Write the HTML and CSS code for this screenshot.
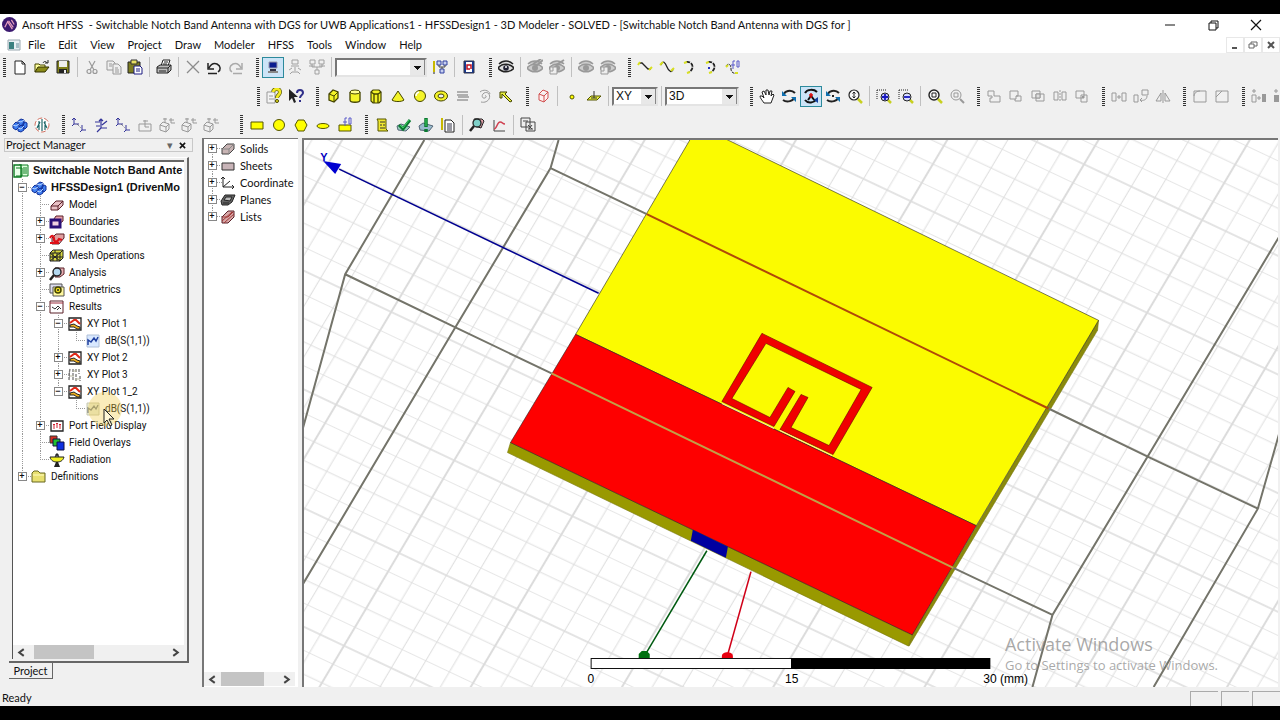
FILE: index.html
```html
<!DOCTYPE html>
<html lang="en">
<head>
<meta charset="utf-8">
<title>Ansoft HFSS</title>
<link rel="stylesheet" href="styles.css">
</head>
<body>
<svg class="sprite" aria-hidden="true">
  <symbol id="new" viewBox="0 0 16 16"><path d="M3 2h7l3 3v10H3z" fill="#fff" stroke="#222"/><path d="M10 2v3h3" fill="none" stroke="#222"/></symbol>
  <symbol id="open" viewBox="0 0 16 16"><path d="M1 13V5h4l1 1h5v2" fill="#ffff9a" stroke="#444400"/><path d="M1 13l3-5h11l-4 5z" fill="#8a8a18" stroke="#333300"/><path d="M9 4c1-2 3-2 4 0M14 1v3h-3" fill="none" stroke="#222"/></symbol>
  <symbol id="save" viewBox="0 0 16 16"><path d="M2 2h12v12H2z" fill="#80801c" stroke="#222"/><path d="M4 2h8v6H4z" fill="#eee"/><path d="M4 10h8v4H4z" fill="#222"/><path d="M9 11h2v3H9z" fill="#eee"/></symbol>
  <symbol id="cut" viewBox="0 0 16 16"><g fill="none" stroke="#999" stroke-width="1.2"><path d="M5 2l5 9M11 2L6 11"/><circle cx="5" cy="12.500" r="2"/><circle cx="11" cy="12.500" r="2"/></g></symbol>
  <symbol id="copy" viewBox="0 0 16 16"><g fill="#eee" stroke="#999"><path d="M1 2h6l2 2v7H1z"/><path d="M7 5h5l3 3v7H7z"/><path d="M3 5h3M3 7h3M9 9h3M9 11h4M9 13h4"/></g></symbol>
  <symbol id="paste" viewBox="0 0 16 16"><path d="M1 3h12v11H1z" fill="#7c7c20" stroke="#222"/><path d="M4 1h6v4H4z" fill="#e8e060" stroke="#333"/><path d="M7 7h6l2 2v6H7z" fill="#fff" stroke="#1a1a80"/><path d="M9 10h4M9 12h4" stroke="#1a1a80"/></symbol>
  <symbol id="print" viewBox="0 0 16 16"><path d="M5 7l2-6h7l-2 6z" fill="#fff" stroke="#222"/><path d="M1 8l3-2h11v5l-3 3H1z" fill="#bbb" stroke="#222"/><path d="M1 9h11v5M12 9l3-3M3 12h7M8 3h4M7 5h4" fill="none" stroke="#222"/></symbol>
  <symbol id="del" viewBox="0 0 16 16"><path d="M2 2l12 12M14 2L2 14" stroke="#8c8c8c" stroke-width="1.300"/></symbol>
  <symbol id="undo" viewBox="0 0 16 16"><path d="M2 4v6h6M3 9c2-4 5-5 8-4 4 2 4 6 1 8" fill="none" stroke="#222" stroke-width="1.500"/><path d="M2 14.500h9" stroke="#222" stroke-width="1.500"/></symbol>
  <symbol id="redo" viewBox="0 0 16 16"><path d="M14 4v6H8M13 9c-2-4-5-5-8-4-4 2-4 6-1 8" fill="none" stroke="#aaa" stroke-width="1.500"/><path d="M5 14.500h9" stroke="#aaa" stroke-width="1.500"/></symbol>
  <symbol id="local" viewBox="0 0 16 16"><path d="M4 3h8v6H4z" fill="#0a1e90" stroke="#99a"/><path d="M3 12h10v2H3z" fill="#888"/><path d="M5 10h6v2H5z" fill="#334"/></symbol>
  <symbol id="remote" viewBox="0 0 16 16"><g fill="none" stroke="#a0a0a0"><path d="M5 1h6v4H5zM4 7h8M5 9l-3 2M8 8v4M11 9l3 2M5 13l-2 2M11 13l2 2M5 13h6"/></g></symbol>
  <symbol id="dist" viewBox="0 0 16 16"><g fill="none" stroke="#a0a0a0"><path d="M1 1h5v4H1zM10 1h5v4h-5zM3 5v3h10V5M8 8v3M6 11h4v4H6zM0 7h6M10 7h6"/></g></symbol>
  <symbol id="queue" viewBox="0 0 16 16"><path d="M2 2v11" stroke="#c8b800" stroke-width="2"/><path d="M2 13v2" stroke="#222"/><g fill="#c8d0f0" stroke="#3040a0"><path d="M5 2h4v4H5zM11 2h4v4h-4zM8 10h4v4H8z"/></g><path d="M7 6v2h6V6M10 8v2" fill="none" stroke="#444"/></symbol>
  <symbol id="help" viewBox="0 0 16 16"><path d="M3 2h10v12H3z" fill="#123a9a" stroke="#334"/><path d="M5 3h6v10H5z" fill="#fff"/><path d="M10 10V6H6v4h3" fill="none" stroke="#c01020" stroke-width="1.500"/></symbol>
  <symbol id="eye" viewBox="0 0 16 16"><path d="M1 5c4-4 10-4 14 0M0 9c4-5 12-5 16 0-4 5-12 5-16 0z" fill="#ddd" stroke="#222" stroke-width="1.500"/><circle cx="8" cy="9" r="2.800" fill="#223"/><circle cx="8" cy="8" r="1" fill="#fff"/></symbol>
  <symbol id="eyeg" viewBox="0 0 16 16"><path d="M1 5c4-4 10-4 14 0M0 9c4-5 12-5 16 0-4 5-12 5-16 0z" fill="#ccc" stroke="#999" stroke-width="1.500"/><circle cx="8" cy="9" r="3" fill="#999"/></symbol>
  <symbol id="eyex" viewBox="0 0 16 16"><use href="#eyeg"/><path d="M6 5l8-5M8 8l8-7" stroke="#999" stroke-width="2"/></symbol>
  <symbol id="eyeb" viewBox="0 0 16 16"><use href="#eyeg"/><path d="M1 8h7v7H1z" fill="#eee" stroke="#999"/><path d="M4 8v4H1" fill="none" stroke="#999"/></symbol>
  <symbol id="eyebx" viewBox="0 0 16 16"><use href="#eyeb"/><path d="M7 6l8-5" stroke="#999" stroke-width="2"/></symbol>
  <symbol id="line" viewBox="0 0 16 16"><path d="M2 4h3l6 6h3" fill="none" stroke="#222" stroke-width="1.300"/><path d="M1 6l2-3M12 11l3-3" stroke="#d8e020" stroke-width="2"/></symbol>
  <symbol id="spline" viewBox="0 0 16 16"><path d="M2 6c2-5 4-3 6 2s5 6 6 2" fill="none" stroke="#222" stroke-width="1.300"/><path d="M1 6l3-3M12 12l3-3" stroke="#d8e020" stroke-width="2"/></symbol>
  <symbol id="arc" viewBox="0 0 16 16"><path d="M5 3c7-1 9 7 3 10" fill="none" stroke="#222" stroke-width="1.800" stroke-dasharray="4 1"/><path d="M3 4l3-1M6 14l3-1" stroke="#d8e020" stroke-width="2"/></symbol>
  <symbol id="arcc" viewBox="0 0 16 16"><use href="#arc"/><path d="M5 8h2v2H5z" fill="#2330c0"/></symbol>
  <symbol id="eqc" viewBox="0 0 16 16"><path d="M1 7c3-4 5-1 5 3s4 5 6 4" fill="none" stroke="#222" stroke-dasharray="3 1"/><path d="M1 8l2-2M10 14h3" stroke="#d8e020" stroke-width="2"/><path d="M10 2H8v8M6 6h4M12 2h2v6h-2z" fill="none" stroke="#5a5aca"/></symbol>
  <symbol id="cat" viewBox="0 0 16 16"><path d="M1 4h8v11H1z" fill="#f4f4f4" stroke="#999"/><path d="M3 8h4M3 11h5" stroke="#999"/><path d="M7 4c1-4 7-4 7 0 0 3-3 3-3 6" fill="none" stroke="#555510" stroke-width="4"/><path d="M7 4c1-4 7-4 7 0 0 3-3 3-3 6" fill="none" stroke="#f2ea20" stroke-width="2.600"/><circle cx="11" cy="13" r="1.500" fill="#f2ea20" stroke="#444400"/></symbol>
  <symbol id="what" viewBox="0 0 16 16"><path d="M1 1v12l3-3 2 5 2-1-2-5h4z" fill="#222"/><path d="M9 5c0-4 6-4 6 0 0 2-3 2-3 5M12 12v2" fill="none" stroke="#30308a" stroke-width="2"/></symbol>
  <symbol id="box" viewBox="0 0 16 16"><path d="M4 6l4-4 5 2v6l-4 4-5-2z" fill="#f4f428" stroke="#444400" stroke-width="1.300"/><path d="M4 6l5 2 4-4M9 8v6" fill="none" stroke="#444400"/></symbol>
  <symbol id="cyl" viewBox="0 0 16 16"><path d="M3 4v8c0 3 10 3 10 0V4" fill="#f4f428" stroke="#444400" stroke-width="1.300"/><ellipse cx="8" cy="4" rx="5" ry="2" fill="#ffff90" stroke="#444400"/></symbol>
  <symbol id="prism" viewBox="0 0 16 16"><path d="M3 4l2-2h6l2 2v9l-2 2H5l-2-2z" fill="#f4f428" stroke="#444400" stroke-width="1.200"/><path d="M3 4l3 2h4l3-2M6 6v9M10 6v9" fill="none" stroke="#444400" stroke-width="1.300"/></symbol>
  <symbol id="cone" viewBox="0 0 16 16"><path d="M8 3L2 12c2 2 10 2 12 0z" fill="#f4f428" stroke="#444400"/></symbol>
  <symbol id="ball" viewBox="0 0 16 16"><circle cx="8" cy="8" r="5.500" fill="#f4f428" stroke="#444400"/><path d="M4 8a4 4 0 0 1 3-4" fill="none" stroke="#fff" stroke-width="1.500"/></symbol>
  <symbol id="torus" viewBox="0 0 16 16"><ellipse cx="8" cy="8" rx="6.500" ry="5" fill="#f4f428" stroke="#444400"/><ellipse cx="8" cy="8" rx="3" ry="2" fill="#eee" stroke="#444400"/></symbol>
  <symbol id="helix" viewBox="0 0 16 16"><path d="M2 4h11M2 7h11M3 9h11M2 12h11" stroke="#999" stroke-width="1.500"/></symbol>
  <symbol id="spiral" viewBox="0 0 16 16"><path d="M8 8c1-1 2 1 0 2-3 1-4-3-1-5 4-2 7 2 5 6-1 2-4 4-8 3M3 4c3-3 9-2 10 2" fill="none" stroke="#999"/></symbol>
  <symbol id="bond" viewBox="0 0 16 16"><path d="M2 10V4h7l-2 2 7 7-2 1-8-8v4z" fill="#e8f040" stroke="#444400"/></symbol>
  <symbol id="rbox" viewBox="0 0 16 16"><path d="M4 6l4-4 5 2v6l-4 4-5-2zM4 6l5 2 4-4M9 8v6" fill="#fff0f0" stroke="#d05050"/></symbol>
  <symbol id="pt" viewBox="0 0 16 16"><circle cx="8" cy="9" r="2" fill="#ff0" stroke="#555500"/></symbol>
  <symbol id="plane" viewBox="0 0 16 16"><path d="M5 8h10l-4 4H1z" fill="#e8f040" stroke="#555500"/><path d="M8 3v7M5 10h6" stroke="#333"/></symbol>
  <symbol id="hand" viewBox="0 0 16 16"><path d="M5 15C3 12 1 10 1 8l2 0 2 2L3 4l2-1 2 4V2h2l1 5 1-4 2 0-1 5 2-2 1 1-3 8z" fill="#fff" stroke="#222"/></symbol>
  <symbol id="rot" viewBox="0 0 16 16"><path d="M3 7c0-4 7-6 11-2M13 9c0 4-7 6-11 3" fill="none" stroke="#222" stroke-width="2"/><path d="M1 3v5h5zM15 14V9h-5z" fill="#1070b0"/></symbol>
  <symbol id="rotc" viewBox="0 0 16 16"><path d="M2 5c2-4 9-4 12-1M2 12c3 4 9 3 12-1M5 12l3-4 4 5" fill="none" stroke="#111" stroke-width="2"/><path d="M8 5v5M6 7h4" stroke="#e01010" stroke-width="1.500"/><path d="M15 15V9l-4 3z" fill="#1040a0"/></symbol>
  <symbol id="rots" viewBox="0 0 16 16"><use href="#rot"/><path d="M7 7h2v2H7z" fill="#222"/></symbol>
  <symbol id="mag" viewBox="0 0 16 16"><path d="M11 11l4 4" stroke="#c8d020" stroke-width="2.500"/><circle cx="7" cy="7" r="5" fill="#f8f8f8" stroke="#222" stroke-width="1.200"/><path d="M7 4v6M5.500 5.500L7 4l1.500 1.500M5.500 8.500L7 10l1.500-1.500" fill="none" stroke="#222"/></symbol>
  <symbol id="zin" viewBox="0 0 16 16"><path d="M1 2h9M1 2v9" stroke="#222" stroke-dasharray="1 1"/><path d="M12 12l3 3" stroke="#c8d020" stroke-width="2.500"/><circle cx="9" cy="9" r="4" fill="#c0c4ff" stroke="#222"/><path d="M6 9h6M9 6v6" stroke="#1818c0" stroke-width="1.800"/></symbol>
  <symbol id="zout" viewBox="0 0 16 16"><path d="M1 2h9M1 2v9" stroke="#222" stroke-dasharray="1 1"/><path d="M12 12l3 3" stroke="#c8d020" stroke-width="2.500"/><circle cx="9" cy="9" r="4" fill="#d8dcff" stroke="#222"/><path d="M6 9h6" stroke="#1818c0" stroke-width="1.800"/></symbol>
  <symbol id="fit" viewBox="0 0 16 16"><path d="M11 11l4 4" stroke="#c8d020" stroke-width="2.500"/><circle cx="7" cy="7" r="5" fill="#f8f8f8" stroke="#222" stroke-width="1.400"/><path d="M5 5h4v4H5z" fill="none" stroke="#222"/></symbol>
  <symbol id="fitg" viewBox="0 0 16 16"><path d="M11 11l4 4" stroke="#999" stroke-width="2"/><circle cx="7" cy="7" r="5" fill="none" stroke="#999"/><path d="M5 5h4v4H5z" fill="none" stroke="#999"/></symbol>
  <symbol id="unite" viewBox="0 0 16 16"><path d="M2 3h6v5h6v6H4v-4h2V8H2z" fill="none" stroke="#999"/></symbol>
  <symbol id="sub" viewBox="0 0 16 16"><path d="M2 3h8v5H8v3H2zM8 8h5v5H7v-2" fill="none" stroke="#999"/></symbol>
  <symbol id="inter" viewBox="0 0 16 16"><path d="M2 3h8v7H2zM6 6h8v7H6z" fill="none" stroke="#999"/><path d="M6 6h4v4H6z" fill="#ddd" stroke="#999"/></symbol>
  <symbol id="split" viewBox="0 0 16 16"><path d="M2 4h4v8H2zM10 4h4v8h-4z" fill="none" stroke="#999"/><path d="M8 2v12" stroke="#999" stroke-dasharray="2 1"/></symbol>
  <symbol id="imp" viewBox="0 0 16 16"><path d="M2 3h8v7H2zM7 7h6v7H7z" fill="none" stroke="#999"/><path d="M8 8h2v2H8z" fill="#999"/></symbol>
  <symbol id="move" viewBox="0 0 16 16"><path d="M1 5h4v8H1zM11 5h4v8h-4zM6 9h4M8 7v4" fill="none" stroke="#999"/></symbol>
  <symbol id="rota" viewBox="0 0 16 16"><path d="M1 7h4v7H1zM9 2h6v5H9zM14 8c0 4-4 5-7 4M9 10l-2 2 2 2" fill="none" stroke="#999"/></symbol>
  <symbol id="mirror" viewBox="0 0 16 16"><path d="M6 5v8H1zM10 5v8h5zM8 2v13" fill="none" stroke="#999"/></symbol>
  <symbol id="fil" viewBox="0 0 16 16"><path d="M2 3h12v11H2zM2 8c0-3 3-5 6-5" fill="none" stroke="#999"/></symbol>
  <symbol id="cham" viewBox="0 0 16 16"><path d="M2 3h12v11H2zM2 9l6-6" fill="none" stroke="#999"/></symbol>
  <symbol id="dup" viewBox="0 0 16 16"><path d="M3 1v4M1 3h4M1 7h4v7H1zM6 10h4M8 8v4" fill="none" stroke="#999"/><path d="M11 6h4v8h-4z" fill="#999"/></symbol>
  <symbol id="dupr" viewBox="0 0 16 16"><path d="M3 1v4M1 3h4M9 2h6v5H9zM7 11h7" fill="none" stroke="#999"/><path d="M1 7h5v7H1z" fill="#999"/></symbol>
  <symbol id="design" viewBox="0 0 16 16"><g fill="#3f7ef0" stroke="#10309a"><path d="M1 8l3-3 3 2v3l-3 3-3-2zM6 4l3-2 3 1v4L9 9 6 7zM6 11l3-3 3 1v4l-3 2-3-1zM11 6l2-1 2 1v4l-2 2-2-1z"/></g><path d="M1 8l3 1 3-2M6 4l3 1 3-2M6 11l3 1 3-3" fill="none" stroke="#b8d4ff"/></symbol>
  <symbol id="hfss" viewBox="0 0 16 16"><circle cx="8" cy="8" r="7" fill="#fff" stroke="#d07060" stroke-dasharray="5 2"/><path d="M8 2v12M5 4v9M11 4v9M3 11l3-6M13 11l-3-6" stroke="#206868" stroke-width="1.200" fill="none"/></symbol>
  <symbol id="cs" viewBox="0 0 16 16"><path d="M3 1v6h5M1 3l2-2 2 2M3 7l-2 2M11 8v5h4M11 13l-2 2" fill="none" stroke="#34349a"/><path d="M6 7l4 4" stroke="#556" stroke-dasharray="1 1"/></symbol>
  <symbol id="csr" viewBox="0 0 16 16"><path d="M8 2v9h6M6 4l2-2 2 2M8 11l-4 4M2 5h5M9 8l5-4M3 9h4" fill="none" stroke="#34349a" stroke-width="1.200"/></symbol>
  <symbol id="csg" viewBox="0 0 16 16"><path d="M2 7h12v7H2zM8 3v7h4M6 4h5" fill="none" stroke="#999"/></symbol>
  <symbol id="csf" viewBox="0 0 16 16"><path d="M1 8l3-3 6 2v5l-3 3-6-2zM1 8l6 2 3-3M7 10v5M6 1v5M12 1v5h4M4 2h4M10 3h5" fill="none" stroke="#999"/></symbol>
  <symbol id="rect" viewBox="0 0 16 16"><path d="M2 5h12v7H2z" fill="#ff0" stroke="#555500"/></symbol>
  <symbol id="circ" viewBox="0 0 16 16"><circle cx="8" cy="8" r="5.500" fill="#ff0" stroke="#555500"/></symbol>
  <symbol id="hex" viewBox="0 0 16 16"><path d="M5 3h6l3 5-3 6H5L2 8z" fill="#ff0" stroke="#555500"/></symbol>
  <symbol id="ell" viewBox="0 0 16 16"><ellipse cx="8" cy="9" rx="6" ry="2.500" fill="#ff0" stroke="#555500"/></symbol>
  <symbol id="eqs" viewBox="0 0 16 16"><path d="M2 8h12v6H2z" fill="#ff0" stroke="#555500"/><path d="M10 1H8v8M6 5h4M12 1h2v6h-2z" fill="none" stroke="#5a5aca"/></symbol>
  <symbol id="sheet" viewBox="0 0 16 16"><path d="M3 2h9v10l2 2H4V4z" fill="#f0e830" stroke="#555500"/><path d="M6 5h5M6 8h2M9 8h2M6 11h5" stroke="#333"/></symbol>
  <symbol id="valid" viewBox="0 0 16 16"><path d="M1 9l4-2 9 3-4 4-8-1z" fill="#9cb" stroke="#567"/><path d="M3 8l4 4 7-9" fill="none" stroke="#0a7a30" stroke-width="3"/><path d="M4 8l3 3 6-8" fill="none" stroke="#40d060"/></symbol>
  <symbol id="run" viewBox="0 0 16 16"><path d="M1 9l4-3 10 3-4 5-9-1z" fill="#9bc" stroke="#567"/><path d="M8 1v9M8 12v3" stroke="#0a7a30" stroke-width="3.500"/><path d="M8 2v7" stroke="#40d060"/></symbol>
  <symbol id="notes" viewBox="0 0 16 16"><path d="M2 1v12" stroke="#c8b800" stroke-width="2"/><path d="M5 3h6l3 3v9H5z" fill="#fff" stroke="#222"/><path d="M7 7h5M7 9h5M7 11h5M7 13h5" stroke="#334"/></symbol>
  <symbol id="solve" viewBox="0 0 16 16"><path d="M5 2l8 0 2 2-3 7-6-2z" fill="#e0a0a8" stroke="#222"/><circle cx="8" cy="6" r="4" fill="#7fd0c8" stroke="#222" stroke-width="1.300"/><path d="M5 9l-4 5" stroke="#222" stroke-width="2.500"/></symbol>
  <symbol id="plot" viewBox="0 0 16 16"><path d="M3 3v11h11" fill="none" stroke="#444"/><path d="M3 12c3 0 3-7 6-7s2 2 5 2" fill="none" stroke="#d04050" stroke-width="1.500"/></symbol>
  <symbol id="wins" viewBox="0 0 16 16"><path d="M1 1h9v9H1zM6 5h9v9H6z" fill="#eee" stroke="#444"/><path d="M3 4h5M8 8l4 4M12 8l-3 4M8 12h5" stroke="#444"/></symbol>

  <symbol id="t-root" viewBox="0 0 16 16"><path d="M6 2h9v11H6z" fill="#dfd" stroke="#0a7a20"/><path d="M1 2h7v12H1z" fill="#eaffea" stroke="#0a7a20" stroke-width="1.400"/><path d="M3 5h6v8H3M11 4v7M13 4v7" fill="none" stroke="#0a7a20"/></symbol>
  <symbol id="t-slab" viewBox="0 0 16 16"><path d="M2 9l5-5h7v4l-5 5H2z" fill="#e8c0c4" stroke="#5a2028"/><path d="M2 9h7l5-5M9 9v4" fill="none" stroke="#5a2028"/></symbol>
  <symbol id="t-solid" viewBox="0 0 16 16"><path d="M2 8l5-5h7v5l-5 5H2z" fill="#c8b4b4" stroke="#444"/><path d="M2 8h7l5-5M9 8v5" fill="none" stroke="#888"/></symbol>
  <symbol id="t-bound" viewBox="0 0 16 16"><path d="M5 5l2-3h7v5l-4 3z" fill="#e8a0a8" stroke="#5a2028"/><path d="M2 6h9v7H2z" fill="#f0d0e0" stroke="#2a1078" stroke-width="3"/></symbol>
  <symbol id="t-exc" viewBox="0 0 16 16"><path d="M3 7l4-4h8v4l-5 6H3z" fill="#e0a0a0" stroke="#5a2028"/><path d="M1 7c2-4 4-2 4 1s3 4 5 0l3 1" fill="none" stroke="#e01018" stroke-width="2.200"/><path d="M1 12h9" stroke="#e01018" stroke-width="2"/></symbol>
  <symbol id="t-mesh" viewBox="0 0 16 16"><path d="M1 5l3-3h10v8l-3 3H1z" fill="#d8d840" stroke="#222"/><path d="M1 5h10v8M11 5l3-3M1 9h13M4 5v8M8 5v8M1 13l10-8M1 5l10 8M6 2v3" fill="none" stroke="#222"/></symbol>
  <symbol id="t-ana" viewBox="0 0 16 16"><path d="M6 3h9v6l-4 3H6z" fill="#e8b0b4" stroke="#5a2028"/><circle cx="8" cy="7" r="4" fill="#b4d8f0" stroke="#222" stroke-width="1.400"/><path d="M5 10l-4 5" stroke="#222" stroke-width="2.500"/></symbol>
  <symbol id="t-opt" viewBox="0 0 16 16"><path d="M1 2h12v9H1z" fill="#dde" stroke="#555"/><path d="M4 5h11v9H4z" fill="#fff8a0" stroke="#555"/><circle cx="9" cy="8" r="3" fill="#f0e020" stroke="#444400" stroke-width="1.500"/><circle cx="9" cy="8" r="1" fill="#222"/></symbol>
  <symbol id="t-res" viewBox="0 0 16 16"><path d="M1 2h13v12H1z" fill="#fff" stroke="#5a2028"/><path d="M1 4h13" stroke="#a03040"/><path d="M3 8l3 2 3-3 3 3M8 11l3-3" fill="none" stroke="#333"/></symbol>
  <symbol id="t-xy" viewBox="0 0 16 16"><path d="M2 2h12v12H2z" fill="#fff" stroke="#222" stroke-width="1.300"/><path d="M3 7l4-3h2l4 4" fill="none" stroke="#e02818" stroke-width="2"/><path d="M3 9l4-1 3 2 3 1v2h-3l-3-2H3z" fill="#f0b020" stroke="#222"/></symbol>
  <symbol id="t-xyg" viewBox="0 0 16 16"><path d="M3 2l-1 5v7M6 2v12M9 2v3M9 7v7M12 2v5M13 9v5" stroke="#777" stroke-width="1.300" stroke-dasharray="3 1"/><path d="M6 4h4M3 9h4M8 12h5" stroke="#b8b8a0"/></symbol>
  <symbol id="t-tr" viewBox="0 0 16 16"><path d="M2 2h12v12H2z" fill="#d8e8ff" stroke="#b0c0d8"/><path d="M3 12V7l3 2 3-4 2 3 2-4" fill="none" stroke="#2040a0" stroke-width="1.500"/></symbol>
  <symbol id="t-trg" viewBox="0 0 16 16"><path d="M2 2h12v12H2z" fill="#e8ecd8" stroke="#c8c8b0"/><path d="M3 12V7l3 2 3-4 2 3 2-4" fill="none" stroke="#808888" stroke-width="1.300"/></symbol>
  <symbol id="t-port" viewBox="0 0 16 16"><path d="M2 3h12v10H2z" fill="#fff" stroke="#222" stroke-width="1.300"/><path d="M5 11V6M8 10V5M11 11V6M4 7l1-1 1 1M7 6l1-1 1 1M10 7l1-1 1 1" fill="none" stroke="#d02030"/></symbol>
  <symbol id="t-fld" viewBox="0 0 16 16"><path d="M1 1h7v7H1z" fill="#d03020" stroke="#333"/><path d="M4 4h7v7H4z" fill="#20c030" stroke="#114"/><path d="M8 7h7v8H8z" fill="#1030e0" stroke="#114"/></symbol>
  <symbol id="t-rad" viewBox="0 0 16 16"><path d="M1 5h14c-1 4-4 5-7 5S2 9 1 5z" fill="#f0f020" stroke="#222"/><path d="M8 1v4M6 3h4M6 5l2-3 2 3" stroke="#222" fill="none"/><path d="M7 10h2l2 5H5z" fill="#222"/></symbol>
  <symbol id="t-dir" viewBox="0 0 16 16"><path d="M1 13V4l2-2h4l2 2h5v9z" fill="#e8e070" stroke="#666620"/><path d="M2 6h11" stroke="#fffcc0"/></symbol>
  <symbol id="t-sheet" viewBox="0 0 16 16"><path d="M2 5h12v7H2z" fill="#c8b4b8" stroke="#333"/></symbol>
  <symbol id="t-cs" viewBox="0 0 16 16"><path d="M3 2v10h11M1 4l2-2 2 2M12 10l2 2-2 2M3 12l7-6" fill="none" stroke="#222"/></symbol>
  <symbol id="t-planes" viewBox="0 0 16 16"><path d="M1 9l4-6h10l-3 7-4 3H2z" fill="#666" stroke="#222"/><path d="M4 8l2-3h6l-2 4zM3 11h6" fill="#bbb" stroke="#222"/></symbol>
  <symbol id="t-lists" viewBox="0 0 16 16"><path d="M2 8l6-6h6v6l-6 6H2z" fill="#d8a8a8" stroke="#5a2028"/><path d="M2 12l10-9M4 14l10-9M2 8h6l5-5" stroke="#a03838" fill="none"/></symbol>
</svg>

<div class="app">
  <header class="titlebar">
    <svg class="logo" viewBox="0 0 16 16"><circle cx="8" cy="8" r="8" fill="#3c1a70"/><path d="M3 11l3-6 5 8M7 4l5 7M10 3l3 5" fill="none" stroke="#e8a0c0" stroke-width="1.300"/></svg>
    <h1>Ansoft HFSS&nbsp; - Switchable Notch Band Antenna with DGS for UWB Applications1 - HFSSDesign1 - 3D Modeler - SOLVED - [Switchable Notch Band Antenna with DGS for ]</h1>
    <div class="winctl">
      <button aria-label="Minimize"><svg viewBox="0 0 12 12"><path d="M1 6h10" stroke="#111"/></svg></button>
      <button aria-label="Restore"><svg viewBox="0 0 12 12"><path d="M2 4h7v7H2zM4 4V2h7v7H9" fill="none" stroke="#111"/></svg></button>
      <button aria-label="Close"><svg viewBox="0 0 12 12"><path d="M1 1l10 10M11 1L1 11" stroke="#111" stroke-width="1.200"/></svg></button>
    </div>
  </header>
  <nav class="menubar">
    <svg class="doc" viewBox="0 0 14 12"><path d="M1 1h12v10H1z" fill="#e8f0f4" stroke="#99a8b0"/><path d="M2 3h5v7H2z" fill="#3a8080"/><path d="M9 4h3v5H9z" fill="#a8c0c8"/></svg>
    <button>File</button><button>Edit</button><button>View</button><button>Project</button><button>Draw</button><button>Modeler</button><button>HFSS</button><button>Tools</button><button>Window</button><button>Help</button>
    <div class="mdictl">
      <button aria-label="Minimize document"><svg viewBox="0 0 10 10"><path d="M2 8h5" stroke="#555" stroke-width="2"/></svg></button>
      <button aria-label="Restore document"><svg viewBox="0 0 10 10"><path d="M1 4h5v4H1zM3 4V2h6v4H6" fill="none" stroke="#666"/></svg></button>
      <button aria-label="Close document"><svg viewBox="0 0 10 10"><path d="M2 2l6 6M8 2L2 8" stroke="#555" stroke-width="2"/></svg></button>
    </div>
  </nav>

  <div class="toolbars">
    <div class="bar">
      <div class="group file">
        <button aria-label="New"><svg><use href="#new"/></svg></button><button aria-label="Open"><svg><use href="#open"/></svg></button><button aria-label="Save"><svg><use href="#save"/></svg></button><i class="sep"></i>
        <button aria-label="Cut"><svg><use href="#cut"/></svg></button><button aria-label="Copy"><svg><use href="#copy"/></svg></button><button aria-label="Paste"><svg><use href="#paste"/></svg></button><i class="sep"></i>
        <button aria-label="Print"><svg><use href="#print"/></svg></button><i class="sep"></i>
        <button aria-label="Delete"><svg><use href="#del"/></svg></button><button aria-label="Undo"><svg><use href="#undo"/></svg></button><button aria-label="Redo"><svg><use href="#redo"/></svg></button>
      </div>
      <div class="group">
        <button class="on" aria-label="Local machine"><svg><use href="#local"/></svg></button><button aria-label="Remote machine"><svg><use href="#remote"/></svg></button><button aria-label="Distributed"><svg><use href="#dist"/></svg></button><i class="sep"></i>
        <select class="wide" aria-label="Machine"><option></option></select>
        <button aria-label="Queue"><svg><use href="#queue"/></svg></button><i class="sep"></i>
        <button aria-label="Help topics"><svg><use href="#help"/></svg></button>
      </div>
      <div class="group">
        <button aria-label="Visibility"><svg><use href="#eye"/></svg></button><i class="sep"></i>
        <button aria-label="Hide selection"><svg><use href="#eyex"/></svg></button><button aria-label="Hide in active view"><svg><use href="#eyebx"/></svg></button><i class="sep"></i>
        <button aria-label="Show selection"><svg><use href="#eyeg"/></svg></button><button aria-label="Show in active view"><svg><use href="#eyeb"/></svg></button>
      </div>
      <div class="group">
        <button aria-label="Line"><svg><use href="#line"/></svg></button><button aria-label="Spline"><svg><use href="#spline"/></svg></button><button aria-label="Arc"><svg><use href="#arc"/></svg></button><button aria-label="Center arc"><svg><use href="#arcc"/></svg></button><button aria-label="Equation curve"><svg><use href="#eqc"/></svg></button>
      </div>
    </div>
    <div class="bar inset">
      <div class="group">
        <button aria-label="Contents"><svg><use href="#cat"/></svg></button><button aria-label="Context help"><svg><use href="#what"/></svg></button>
      </div>
      <div class="group solids">
        <button aria-label="Box"><svg><use href="#box"/></svg></button><button aria-label="Cylinder"><svg><use href="#cyl"/></svg></button><button aria-label="Polyhedron"><svg><use href="#prism"/></svg></button><button aria-label="Cone"><svg><use href="#cone"/></svg></button><button aria-label="Sphere"><svg><use href="#ball"/></svg></button><button aria-label="Torus"><svg><use href="#torus"/></svg></button><button aria-label="Helix"><svg><use href="#helix"/></svg></button><button aria-label="Spiral"><svg><use href="#spiral"/></svg></button><button aria-label="Bondwire"><svg><use href="#bond"/></svg></button>
      </div>
      <div class="group">
        <button aria-label="Region"><svg><use href="#rbox"/></svg></button><i class="sep"></i>
        <button aria-label="Point"><svg><use href="#pt"/></svg></button><button aria-label="Plane"><svg><use href="#plane"/></svg></button><i class="sep"></i>
        <select class="short" aria-label="Drawing plane"><option>XY</option></select><i class="sep"></i>
        <select class="mid" aria-label="Movement mode"><option>3D</option></select>
      </div>
      <div class="group">
        <button aria-label="Pan"><svg><use href="#hand"/></svg></button><button aria-label="Rotate"><svg><use href="#rot"/></svg></button><button class="on" aria-label="Rotate around center"><svg><use href="#rotc"/></svg></button><button aria-label="Rotate screen"><svg><use href="#rots"/></svg></button><button aria-label="Zoom"><svg><use href="#mag"/></svg></button><i class="sep"></i>
        <button aria-label="Zoom in"><svg><use href="#zin"/></svg></button><button aria-label="Zoom out"><svg><use href="#zout"/></svg></button><i class="sep"></i>
        <button aria-label="Fit all"><svg><use href="#fit"/></svg></button><button aria-label="Fit selection"><svg><use href="#fitg"/></svg></button>
      </div>
      <div class="group">
        <button aria-label="Unite"><svg><use href="#unite"/></svg></button><button aria-label="Subtract"><svg><use href="#sub"/></svg></button><button aria-label="Intersect"><svg><use href="#inter"/></svg></button><button aria-label="Split"><svg><use href="#split"/></svg></button><button aria-label="Imprint"><svg><use href="#imp"/></svg></button>
      </div>
      <div class="group">
        <button aria-label="Move"><svg><use href="#move"/></svg></button><button aria-label="Rotate object"><svg><use href="#rota"/></svg></button><button aria-label="Mirror"><svg><use href="#mirror"/></svg></button>
      </div>
      <div class="group">
        <button aria-label="Fillet"><svg><use href="#fil"/></svg></button><button aria-label="Chamfer"><svg><use href="#cham"/></svg></button>
      </div>
      <div class="group">
        <button aria-label="Duplicate along line"><svg><use href="#dup"/></svg></button><button aria-label="Duplicate around axis"><svg><use href="#dupr"/></svg></button>
      </div>
    </div>
    <div class="bar">
      <div class="group">
        <button aria-label="Insert design"><svg><use href="#design"/></svg></button><button aria-label="Insert HFSS design"><svg><use href="#hfss"/></svg></button>
      </div>
      <div class="group coords">
        <button aria-label="Relative offset"><svg><use href="#cs"/></svg></button><button aria-label="Relative rotated"><svg><use href="#csr"/></svg></button><button aria-label="Relative both"><svg><use href="#cs"/></svg></button><button aria-label="Face system"><svg><use href="#csg"/></svg></button><button aria-label="Object offset"><svg><use href="#csf"/></svg></button><button aria-label="Object rotated"><svg><use href="#csf"/></svg></button><button aria-label="Object both"><svg><use href="#csf"/></svg></button>
      </div>
      <div class="group">
        <button aria-label="Rectangle"><svg><use href="#rect"/></svg></button><button aria-label="Circle"><svg><use href="#circ"/></svg></button><button aria-label="Polygon"><svg><use href="#hex"/></svg></button><button aria-label="Ellipse"><svg><use href="#ell"/></svg></button><button aria-label="Equation surface"><svg><use href="#eqs"/></svg></button>
      </div>
      <div class="group">
        <button aria-label="Solution setup"><svg><use href="#sheet"/></svg></button><button aria-label="Validate"><svg><use href="#valid"/></svg></button><button aria-label="Analyze all"><svg><use href="#run"/></svg></button><button aria-label="Notes"><svg><use href="#notes"/></svg></button><i class="sep"></i>
        <button aria-label="Solution data"><svg><use href="#solve"/></svg></button><button aria-label="Results"><svg><use href="#plot"/></svg></button><i class="sep"></i>
        <button aria-label="Copy image"><svg><use href="#wins"/></svg></button>
      </div>
    </div>
  </div>

  <main class="workspace">
    <section class="manager">
      <div class="panelhead"><h2>Project Manager</h2><button aria-label="Panel menu">▾</button><button aria-label="Close panel"><svg viewBox="0 0 8 8"><path d="M1 1l6 6M7 1L1 7" stroke="#111" stroke-width="1.800"/></svg></button></div>
      <div class="treeframe">
        <div class="treebox">
          <ul class="tree">
            <li class="root"><svg><use href="#t-root"/></svg><b>Switchable Notch Band Ante</b></li>
            <li><span class="g v h"><button aria-label="Collapse">−</button></span><svg><use href="#design"/></svg><b>HFSSDesign1 (DrivenMo</b></li>
            <li><span class="g v"></span><span class="g v h"></span><svg><use href="#t-slab"/></svg>Model</li>
            <li><span class="g v"></span><span class="g v h"><button aria-label="Expand">+</button></span><svg><use href="#t-bound"/></svg>Boundaries</li>
            <li><span class="g v"></span><span class="g v h"><button aria-label="Expand">+</button></span><svg><use href="#t-exc"/></svg>Excitations</li>
            <li><span class="g v"></span><span class="g v h"></span><svg><use href="#t-mesh"/></svg>Mesh Operations</li>
            <li><span class="g v"></span><span class="g v h"><button aria-label="Expand">+</button></span><svg><use href="#t-ana"/></svg>Analysis</li>
            <li><span class="g v"></span><span class="g v h"></span><svg><use href="#t-opt"/></svg>Optimetrics</li>
            <li><span class="g v"></span><span class="g v h"><button aria-label="Collapse">−</button></span><svg><use href="#t-res"/></svg>Results</li>
            <li><span class="g v"></span><span class="g v"></span><span class="g v h"><button aria-label="Collapse">−</button></span><svg><use href="#t-xy"/></svg>XY Plot 1</li>
            <li><span class="g v"></span><span class="g v"></span><span class="g v"></span><span class="g l h"></span><svg><use href="#t-tr"/></svg>dB(S(1,1))</li>
            <li><span class="g v"></span><span class="g v"></span><span class="g v h"><button aria-label="Expand">+</button></span><svg><use href="#t-xy"/></svg>XY Plot 2</li>
            <li><span class="g v"></span><span class="g v"></span><span class="g v h"><button aria-label="Expand">+</button></span><svg><use href="#t-xyg"/></svg>XY Plot 3</li>
            <li><span class="g v"></span><span class="g v"></span><span class="g l h"><button aria-label="Collapse">−</button></span><svg><use href="#t-xy"/></svg>XY Plot 1_2</li>
            <li class="hover"><span class="g v"></span><span class="g v"></span><span class="g"></span><span class="g l h"></span><svg><use href="#t-trg"/></svg>dB(S(1,1))<span class="halo"></span>
              <svg class="cursor" viewBox="0 0 12 19"><path d="M1 1v14l3-3 3 6 2-1-3-6h5z" fill="#fff8d8" stroke="#222"/></svg></li>
            <li><span class="g v"></span><span class="g v h"><button aria-label="Expand">+</button></span><svg><use href="#t-port"/></svg>Port Field Display</li>
            <li><span class="g v"></span><span class="g v h"></span><svg><use href="#t-fld"/></svg>Field Overlays</li>
            <li><span class="g v"></span><span class="g l h"></span><svg><use href="#t-rad"/></svg>Radiation</li>
            <li><span class="g l h"><button aria-label="Expand">+</button></span><svg><use href="#t-dir"/></svg>Definitions</li>
          </ul>
          <div class="scroll"><button aria-label="Scroll left"><svg viewBox="0 0 8 8"><path d="M6 1L2 4l4 3" fill="none" stroke="#444" stroke-width="1.800"/></svg></button><span class="track"><span class="thumb"></span></span><button aria-label="Scroll right"><svg viewBox="0 0 8 8"><path d="M2 1l4 3-4 3" fill="none" stroke="#444" stroke-width="1.800"/></svg></button></div>
        </div>
      </div>
      <button class="tab">Project</button>
    </section>

    <section class="objects">
      <ul class="tree segoe">
        <li><span class="g l2 h"><button aria-label="Expand">+</button></span><svg><use href="#t-solid"/></svg>Solids</li>
        <li><span class="g v h"><button aria-label="Expand">+</button></span><svg><use href="#t-sheet"/></svg>Sheets</li>
        <li><span class="g v h"><button aria-label="Expand">+</button></span><svg><use href="#t-cs"/></svg>Coordinate</li>
        <li><span class="g v h"><button aria-label="Expand">+</button></span><svg><use href="#t-planes"/></svg>Planes</li>
        <li><span class="g l h"><button aria-label="Expand">+</button></span><svg><use href="#t-lists"/></svg>Lists</li>
      </ul>
      <div class="scroll"><button aria-label="Scroll left"><svg viewBox="0 0 8 8"><path d="M6 1L2 4l4 3" fill="none" stroke="#444" stroke-width="1.800"/></svg></button><span class="track"><span class="thumb"></span></span><button aria-label="Scroll right"><svg viewBox="0 0 8 8"><path d="M2 1l4 3-4 3" fill="none" stroke="#444" stroke-width="1.800"/></svg></button></div>
    </section>

    <section class="viewport">
      <svg class="scene" viewBox="304 140 974 546" preserveAspectRatio="xMidYMid slice" role="img" aria-label="3D model of the antenna">
        <defs>
          <pattern id="grid" width="100" height="100" patternUnits="userSpaceOnUse" patternTransform="matrix(1.179 .5565 -.55 .925 274 256)">
            <path d="M20 0v100M40 0v100M60 0v100M80 0v100M0 20h100M0 40h100M0 60h100M0 80h100" stroke="#dfdfdf" stroke-width=".8"/>
            <path d="M0 0v100M100 0v100M0 0h100M0 100h100" stroke="#dcdcdc" stroke-width="1.600"/>
          </pattern>
        </defs>
        <path d="M304 140h974v546H304z" fill="url(#grid)"/>
        <g stroke="#222" stroke-width=".6">
          <path d="M1098 320l-1 10-188 315-1 0 4-11z" fill="#8a8a0c" stroke="#77770c"/>
          <path d="M511 442l401 192-4 11-400-193z" fill="#999900" stroke="#77770c"/>
          <path d="M690 140l-2-1h38l2 1 370 180-122 205-400-191z" fill="#fbfb00"/>
          <path d="M576 334l400 191-64 109-401-192z" fill="#fe0000"/>
          <path d="M693 529l35 17-2 11-35-17z" fill="#0000a0" stroke="none"/>
          <path d="M722 401l40-68 110 54-39 67-53-25 21-35 7 3-17 30 38 18 32-56-95-46-34 55 38 19 18-30 7 4-21 35z" fill="#f00000" stroke="#600"/>
        </g>
        <path d="M722 403l52 25M780 430l52 25" stroke="#ffe9a0" fill="none"/>
        <g fill="none" stroke="#74746a" stroke-width="2">
          <path d="M425 140l-79 134-42 153M559 140l-8 28-95 159-152 256M346 274l110 53 96 46M551 168l96 46M1048 408l99 48 110 52M953 567l99 47M1278 237l-131 219-95 158-20 72M1278 434l-21 74-104 178"/>
          <path d="M647 214l401 194" stroke="#b04808"/>
          <path d="M552 373l401 194" stroke="#c0a048"/>
        </g>
        <path d="M340 169l259 124" stroke="#000090" stroke-width="1.500"/>
        <path d="M324 161l18 3-6 10z" fill="#0000d0"/>
        <text x="321" y="161" class="axis">Y</text>
        <path d="M707 550l-61 103" stroke="#005a10" stroke-width="1.500"/>
        <path d="M751 571l-23 82" stroke="#d00018" stroke-width="1.500"/>
        <path d="M639 653l3-3h5l3 3v4h-11z" fill="#007010"/>
        <path d="M722 655c0-5 11-5 11 0v2h-11z" fill="#e80010"/>
        <path d="M591.500 657.500h200v10h-200z" fill="#fff" stroke="#111"/>
        <path d="M791 657h199v11H791z"/>
        <g class="scale"><text x="588" y="682">0</text><text x="785" y="682">15</text><text x="983" y="682">30 (mm)</text></g>
      </svg>
      <p class="watermark"><strong>Activate Windows</strong><span>Go to Settings to activate Windows.</span></p>
    </section>
  </main>

  <footer class="status"><span>Ready</span><i></i><i></i><i></i></footer>
</div>
</body>
</html>
```
FILE: styles.css
```css
* { box-sizing: border-box; }
body {
  margin: 0;
  height: 100vh;
  padding: 14px 0;
  background: #000;
  color: #111;
  font: 11px/16px Lato, "Open Sans", sans-serif;
  overflow: hidden;
}
h1, h2, p, ul { margin: 0; padding: 0; font: inherit; }
ul { list-style: none; }
button {
  margin: 0;
  padding: 0;
  border: 0;
  background: none;
  color: inherit;
  font: inherit;
}
.sprite { position: absolute; width: 0; height: 0; }
.app {
  display: flex;
  flex-direction: column;
  height: 100%;
  background: #f0f0f0;
}

/* Title and menu */
.titlebar {
  display: flex;
  align-items: center;
  height: 21px;
  padding: 0 3px 0 2px;
  background: #fff;
}
.logo { width: 15px; height: 15px; margin-right: 5px; }
.titlebar h1 { flex: 1; white-space: nowrap; overflow: hidden; }
.winctl { display: flex; }
.winctl button { width: 43px; height: 20px; display: grid; place-items: center; }
.winctl svg { width: 12px; height: 12px; }
.menubar {
  display: flex;
  align-items: center;
  gap: 1px;
  height: 18px;
  padding: 1px 0 0 7px;
  background: #fff;
}
.menubar > button { padding: 0 6px; }
.doc { width: 14px; height: 12px; }
.mdictl { display: flex; margin-left: auto; }
.mdictl button { width: 18px; height: 16px; display: grid; place-items: center; border: 1px solid #e8e8e8; }
.mdictl svg { width: 10px; height: 10px; }

/* Toolbars */
.toolbars { display: flex; flex-direction: column; gap: 1px; flex: none; }
.bar { display: flex; gap: 6px; height: 28px; overflow: hidden; }
.bar:last-child { height: 27px; }
.inset { padding-left: 254px; }
.group { display: flex; flex: none; align-items: center; }
.group::before {
  content: "";
  flex: none;
  width: 3px;
  height: 19px;
  margin: 0 3px;
  background: repeating-linear-gradient(#333 0 1px, #f0f0f0 1px 2px);
}
.file { width: 247px; }
.solids { width: 204px; }
.coords { width: 172px; }
.group button { flex: 0 1 auto; width: 22px; min-width: 0; height: 21px; display: grid; place-items: center; }
.group button svg { width: 16px; height: 16px; }
.group .on { border: 1px solid #2c8a9c; background: #cce4f7; }
.sep { flex: none; width: 7px; height: 20px; border-left: 1px solid #c0c0c0; margin-left: 3px; margin-right: -3px; }
select {
  flex: none;
  height: 19px;
  padding: 0 2px;
  border: 2px solid;
  border-color: #777 #e4e4e4 #e4e4e4 #777;
  border-radius: 0;
  appearance: none;
  color: #111;
  font: 12px/14px "Liberation Sans", sans-serif;
  background:
    linear-gradient(#111, #111) right 4px top 6px / 7px 1px no-repeat,
    linear-gradient(#111, #111) right 5px top 7px / 5px 1px no-repeat,
    linear-gradient(#111, #111) right 6px top 8px / 3px 1px no-repeat,
    linear-gradient(#111, #111) right 7px top 9px / 1px 1px no-repeat,
    linear-gradient(#888, #888) right / 1px 100% no-repeat,
    linear-gradient(#e8e8e8, #e8e8e8) right / 15px 100% no-repeat,
    #fff;
}
.wide { width: 92px; margin-right: 2px; }
.short { width: 46px; }
.mid { width: 74px; margin-right: 2px; }

/* Side panels */
.workspace { display: flex; flex: 1; min-height: 0; padding-right: 2px; }
.manager { display: flex; flex-direction: column; width: 193px; padding-left: 4px; margin-right: 9px; }
.panelhead {
  display: flex;
  align-items: center;
  height: 14px;
  padding: 0 4px 0 1px;
  border: 1px solid #c8c8c8;
  line-height: 12px;
}
.panelhead h2 { flex: 1; }
.panelhead button { width: 12px; line-height: 10px; color: #666; }
.panelhead svg { width: 7px; height: 7px; }
.treeframe {
  flex: 1;
  min-height: 0;
  margin: 5px 4px 0 5px;
  padding: 2px 3px 2px 3px;
  border-right: 2px solid #666;
  border-bottom: 2px solid #666;
  border-top: 1px solid #fff;
}
.treebox {
  display: flex;
  flex-direction: column;
  height: 100%;
  border-left: 1px solid #555;
  border-top: 2px solid #666;
  background: #fff;
  overflow: hidden;
}
.tree { flex: 1; font: 10px/17px Roboto, "Liberation Sans", sans-serif; }
.tree li { display: flex; align-items: center; height: 17px; white-space: nowrap; }
.tree b { font: bold 11px/17px "Liberation Sans", sans-serif; }
.tree li > svg { flex: none; width: 16px; height: 16px; margin-right: 4px; }
.g { position: relative; flex: none; display: grid; place-items: center; width: 18px; height: 17px; }
.v::before, .l::before, .l2::before {
  content: "";
  position: absolute;
  left: 9px;
  top: 0;
  height: 100%;
  border-left: 1px dotted #999;
}
.l::before { height: 50%; }
.l2::before { top: 50%; height: 50%; }
.h::after { content: ""; position: absolute; left: 9px; top: 8px; width: 9px; border-top: 1px dotted #999; }
.g button {
  position: relative;
  z-index: 1;
  width: 9px;
  height: 9px;
  border: 1px solid #888;
  background: #fff;
  font: bold 9px/7px "Liberation Sans", sans-serif;
}
.hover { position: relative; }
.halo {
  position: absolute;
  left: 75px;
  top: -8px;
  width: 34px;
  height: 34px;
  border-radius: 50%;
  background: rgb(240 200 60 / 35%);
}
.tree .hover .cursor { position: absolute; left: 90px; top: 8px; width: 12px; height: 19px; z-index: 2; }
.scroll { display: flex; height: 14px; flex: none; background: #f0f0f0; }
.scroll button { width: 17px; display: grid; place-items: center; }
.scroll svg { width: 9px; height: 9px; }
.track { flex: 1; display: flex; padding-left: 4px; }
.thumb { width: 45%; background: #c4c4c4; }
.tab {
  align-self: flex-start;
  width: 44px;
  height: 16px;
  margin: 0 0 8px 5px;
  border-right: 1px solid #666;
  border-bottom: 1px solid #666;
  line-height: 14px;
}
.objects {
  display: flex;
  flex-direction: column;
  width: 96px;
  margin-right: 4px;
  padding-top: 1px;
  border-left: 2px solid #777;
  border-top: 1px solid #777;
  background: #fff;
  overflow: hidden;
}
.objects .scroll { margin: 0 3px 1px 0; }
.objects .track { padding-left: 0; }
.objects .thumb { width: 75%; }
.segoe { font: 11px/17px Lato, "Open Sans", sans-serif; }
.segoe .g { width: 16px; }
.segoe .g::before { left: 8px; }

/* Model view */
.viewport {
  position: relative;
  flex: 1;
  min-width: 0;
  border-left: 2px solid #777;
  border-top: 2px solid #777;
  background: #fff;
}
.scene { display: block; width: 100%; height: 100%; }
.axis { font: bold 11px "Liberation Sans", sans-serif; fill: #0000c0; }
.scale { font: 12px "Liberation Sans", sans-serif; }
.watermark {
  position: absolute;
  right: 60px;
  bottom: 13px;
  display: flex;
  flex-direction: column;
  color: rgb(140 140 140 / 75%);
  font: 13px/18px "Open Sans", sans-serif;
}
.watermark strong { font: 18px/24px "Open Sans", sans-serif; }

/* Status bar */
.status { display: flex; align-items: center; gap: 3px; height: 19px; padding: 3px 0 0 2px; }
.status span { flex: 1; }
.status i { width: 28px; height: 15px; border-left: 1px solid #aaa; border-top: 1px solid #aaa; }
```
